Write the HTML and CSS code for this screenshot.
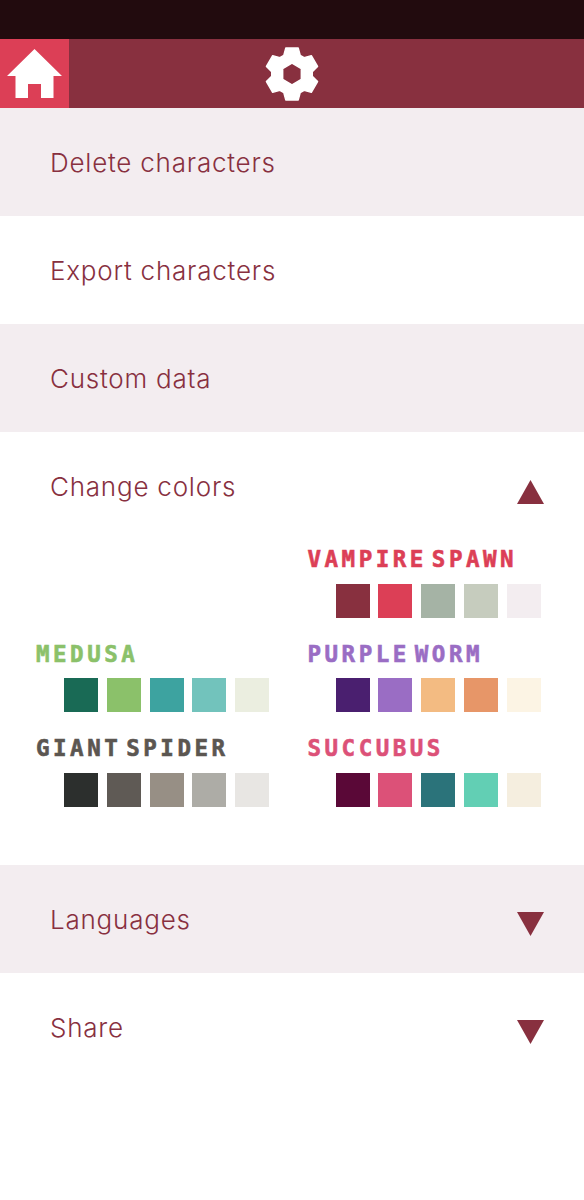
FILE: index.html
```html
<!DOCTYPE html>
<html lang="en">
<head>
<meta charset="utf-8">
<title>Settings</title>
<link rel="stylesheet" href="styles.css">
</head>
<body>
<div class="status-bar"></div>
<nav class="nav">
  <a class="home"><svg viewBox="0 0 69 69" width="69" height="69"><path fill="#fff" d="M34.500 10 L62 37 H53.500 V59 H41 V45 H28 V59 H15.500 V37 H7 Z"/></svg></a>
  <span class="gear"><svg viewBox="-30 -30 60 60" width="60" height="60"><path fill="#fff" stroke="#fff" stroke-width="1.500" stroke-linejoin="round" fill-rule="evenodd" transform="scale(.96)" d="M-8.500-19.500L-6.500-27H6.500L8.500-19.500L12.640-17.110L20.130-19.130L26.630-7.870L21.140-2.390V2.390L26.630 7.870L20.130 19.130L12.640 17.110L8.500 19.500L6.500 27H-6.500L-8.500 19.500L-12.640 17.110L-20.130 19.130L-26.630 7.870L-21.140 2.390V-2.390L-26.630-7.870L-20.130-19.130L-12.640-17.110ZM0-11.200L-9.700-5.600V5.600L0 11.200L9.700 5.600V-5.600Z"/></svg></span>
</nav>
<main>
  <div class="row shaded"><span class="label">Delete characters</span></div>
  <div class="row"><span class="label">Export characters</span></div>
  <div class="row shaded"><span class="label">Custom data</span></div>
  <section class="colors">
    <div class="row"><span class="label">Change colors</span><span class="tri up"></span></div>
    <div class="themes">
      <div class="theme slot-right">
        <div class="name vampire">VAMPIRE SPAWN</div>
        <div class="swatches"><i class="s1a"></i><i class="s1b"></i><i class="s1c"></i><i class="s1d"></i><i class="s1e"></i></div>
      </div>
      <div class="theme">
        <div class="name medusa">MEDUSA</div>
        <div class="swatches"><i class="s2a"></i><i class="s2b"></i><i class="s2c"></i><i class="s2d"></i><i class="s2e"></i></div>
      </div>
      <div class="theme">
        <div class="name worm">PURPLE WORM</div>
        <div class="swatches"><i class="s3a"></i><i class="s3b"></i><i class="s3c"></i><i class="s3d"></i><i class="s3e"></i></div>
      </div>
      <div class="theme">
        <div class="name spider">GIANT SPIDER</div>
        <div class="swatches"><i class="s4a"></i><i class="s4b"></i><i class="s4c"></i><i class="s4d"></i><i class="s4e"></i></div>
      </div>
      <div class="theme">
        <div class="name succubus">SUCCUBUS</div>
        <div class="swatches"><i class="s5a"></i><i class="s5b"></i><i class="s5c"></i><i class="s5d"></i><i class="s5e"></i></div>
      </div>
    </div>
  </section>
  <div class="row shaded"><span class="label">Languages</span><span class="tri down"></span></div>
  <div class="row"><span class="label">Share</span><span class="tri down"></span></div>
</main>
</body>
</html>
```
FILE: styles.css
```css
* { box-sizing: border-box; }
html, body { margin: 0; padding: 0; background: #fff; }
body { width: 584px; height: 1200px; overflow: hidden; font-family: "Inter", "Liberation Sans", sans-serif; }
.status-bar { height: 39px; background: #220b0e; }
.nav { height: 69px; background: #88303f; display: flex; align-items: center; }
.home { width: 69px; height: 69px; background: #dc3f56; display: block; flex: none; }
.home svg { display: block; }
.gear { width: 60px; height: 60px; margin-left: 192.5px; }
.gear svg { display: block; }
.row { height: 108px; padding: 1px 0 0 50px; position: relative; display: flex; align-items: center; }
.shaded { background: #f3edf0; }
.label { font-size: 26px; font-weight: 300; color: #88303f; letter-spacing: 0.78px; line-height: 30px; }
.tri { position: absolute; left: 517px; width: 27px; height: 24px; background: #88303f; }
.tri.up { top: 48px; clip-path: polygon(50% 0, 100% 100%, 0 100%); }
.tri.down { top: 47px; clip-path: polygon(0 0, 100% 0, 50% 100%); }
.colors { height: 433px; }
.themes { display: grid; grid-template-columns: 271.5px 271.5px; grid-auto-rows: 94.5px; padding-left: 36px; margin-top: 6px; }
.slot-right { grid-column: 2; }
.name { font-family: "DejaVu Sans Mono", "Liberation Mono", monospace; font-weight: 700; font-size: 22.5px; line-height: 26px; height: 37.5px; letter-spacing: 3.5px; word-spacing: -12px; white-space: nowrap; -webkit-text-stroke: 0.6px currentColor; }
.swatches { display: flex; gap: 8.8px; padding-left: 28px; }
.swatches i { display: block; width: 34px; height: 34px; }
.vampire { color: #dc3f56; }
.medusa { color: #8bc16a; }
.worm { color: #9a6dc4; }
.spider { color: #5b5651; }
.succubus { color: #dc5178; }
.s1a { background: #88303f; } .s1b { background: #dc3f56; } .s1c { background: #a5b3a5; } .s1d { background: #c6ccbe; } .s1e { background: #f3edf0; }
.s2a { background: #196a55; } .s2b { background: #8bc16a; } .s2c { background: #3da3a0; } .s2d { background: #72c3bc; } .s2e { background: #ebeee0; }
.s3a { background: #4a1f6f; } .s3b { background: #9a6dc4; } .s3c { background: #f3bb82; } .s3d { background: #e79668; } .s3e { background: #fcf4e4; }
.s4a { background: #2c2f2d; } .s4b { background: #5f5a55; } .s4c { background: #978f85; } .s4d { background: #adaca6; } .s4e { background: #e8e6e3; }
.s5a { background: #5a0837; } .s5b { background: #dc5178; } .s5c { background: #2b737a; } .s5d { background: #62cfb4; } .s5e { background: #f5eedf; }
```
